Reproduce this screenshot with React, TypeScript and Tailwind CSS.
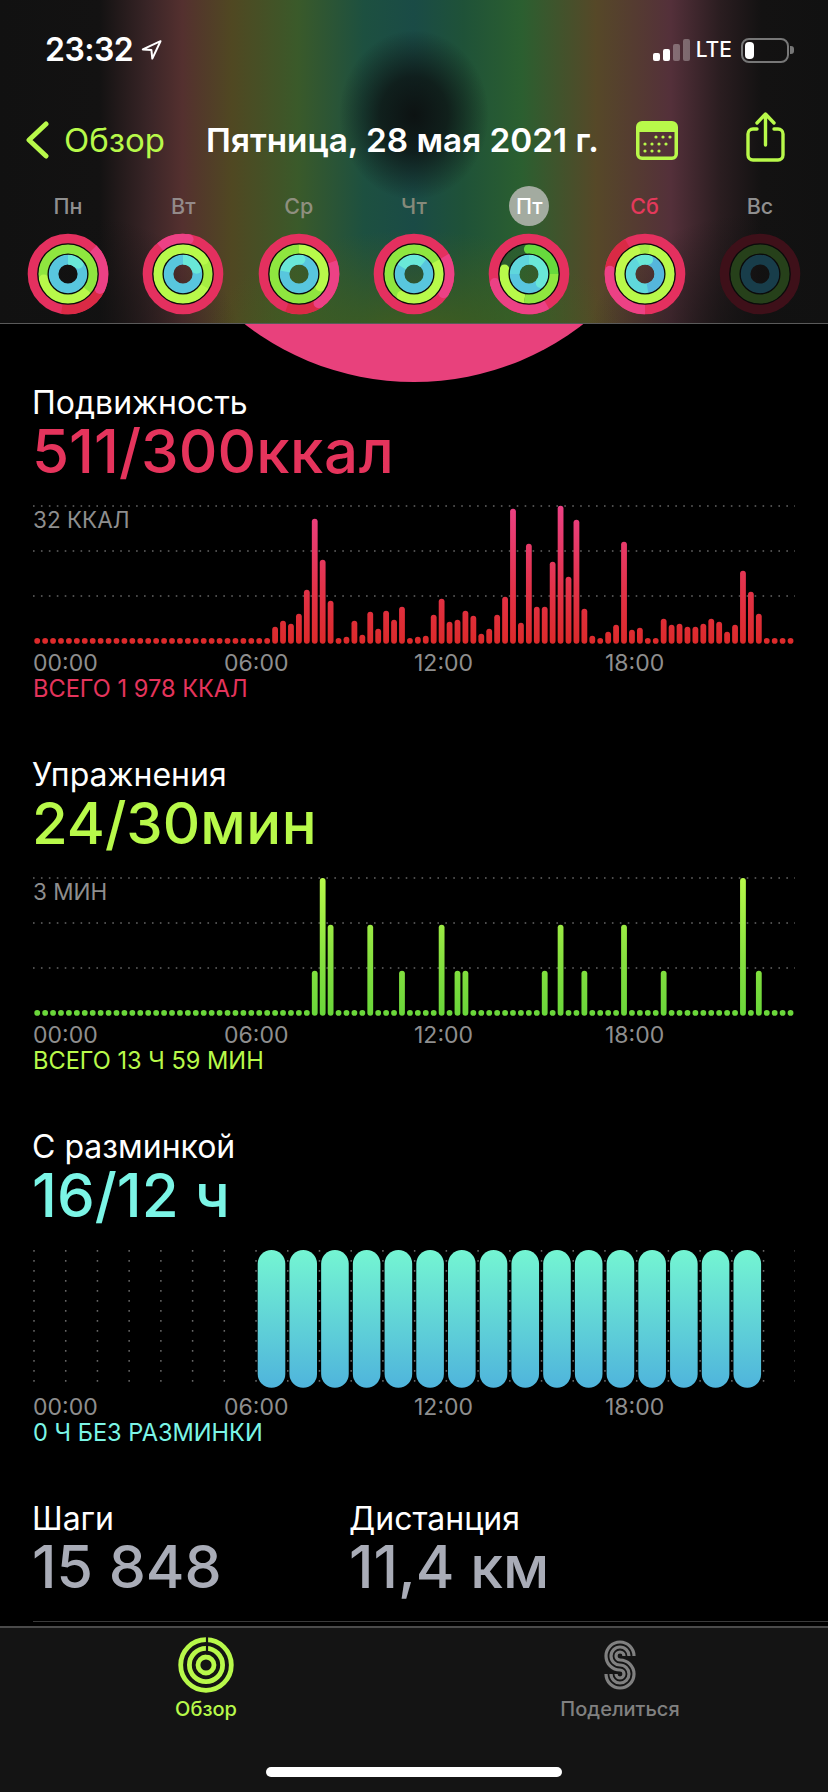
import React from 'react';

const LIME = '#b8f94a';

const redBars: Record<number, number> = {
  30: 17, 31: 23, 32: 20, 33: 30, 34: 54, 35: 125, 36: 84, 37: 43, 39: 7, 40: 23, 41: 9, 42: 32, 43: 15, 44: 33, 45: 24, 46: 37,
  48: 7, 49: 8, 50: 29, 51: 45, 52: 22, 53: 24, 54: 33, 55: 28, 56: 10, 57: 15, 58: 29, 59: 47, 60: 135, 61: 21, 62: 100, 63: 37,
  64: 37, 65: 82, 66: 138, 67: 67, 68: 124, 69: 35, 70: 8, 72: 12, 73: 19, 74: 102, 75: 14, 76: 16, 79: 25, 80: 19, 81: 20, 82: 17,
  83: 17, 84: 20, 85: 25, 86: 22, 87: 12, 88: 19, 89: 73, 90: 52, 91: 30,
};

const greenBars: Record<number, number> = {
  35: 45, 36: 137.7, 37: 91, 42: 91, 46: 45, 51: 91, 53: 45, 54: 45, 64: 45, 66: 91, 69: 45, 74: 91, 79: 45, 89: 137.7, 91: 45,
};

const indexes = Array.from({ length: 96 }, (_, i) => i);

function BarChart({ id, bars, top, mid, bottom }: { id: string; bars: Record<number, number>; top: string; mid: string; bottom: string }) {
  return (
    <svg width="762" height="140" className="block">
      <defs>
        <linearGradient id={id} gradientUnits="userSpaceOnUse" x1="0" y1="1" x2="0" y2="139">
          <stop offset="0" stopColor={top} />
          <stop offset="0.6" stopColor={mid} />
          <stop offset="1" stopColor={bottom} />
        </linearGradient>
      </defs>
      {[1, 46, 91].map((y) => (
        <line key={y} x1="0" x2="762" y1={y} y2={y} stroke="#666666" strokeWidth="1.5" strokeDasharray="1.6 6.33" />
      ))}
      {indexes.map((i) => {
        const h = Math.max(bars[i] ?? 5.6, 5.6);
        return <rect key={i} x={1.3 + i * 7.93} y={138.7 - h} width="5.8" height={h} rx="2.9" fill={`url(#${id})`} />;
      })}
    </svg>
  );
}

function StandChart() {
  return (
    <svg width="762" height="140" className="block">
      <defs>
        <linearGradient id="stand" x1="0" y1="0" x2="0" y2="1">
          <stop offset="0" stopColor="#74f5d2" />
          <stop offset="1" stopColor="#4fb4dc" />
        </linearGradient>
      </defs>
      {Array.from({ length: 25 }, (_, i) => (
        <line key={i} x1={1 + i * 31.72} x2={1 + i * 31.72} y1="1" y2="134" stroke="#666666" strokeWidth="1.5" strokeDasharray="1.8 8.2" />
      ))}
      {Array.from({ length: 16 }, (_, i) => (
        <rect key={i} x={224.7 + i * 31.72} y="1" width="27.6" height="137.7" rx="13.8" fill="url(#stand)" />
      ))}
    </svg>
  );
}

function Section({ title, value, unit, color, size, scale, total, chart }: {
  title: string; value: string; unit: string; color: string; size: string; scale?: string; total: string; chart: React.ReactNode;
}) {
  return (
    <section className="h-[372px] px-[33px]">
      <h2 className="-ml-[1px] text-[32px] leading-[36px] text-white">{title}</h2>
      <div className={`-ml-[1px] leading-[60px] font-medium whitespace-nowrap ${size}`} style={{ color }}>
        {value}
        <span className="tracking-[0.6px]">{unit}</span>
      </div>
      <div className="relative mt-[24px]">
        {chart}
        {scale && <span className="absolute left-0 top-[2px] text-[22.5px] leading-[26px] text-[#8e8e8e]">{scale}</span>}
      </div>
      <div className="relative h-[26px] mt-[5px] text-[23px] leading-[26px] text-[#8e8e8e]">
        <span className="absolute left-0">00:00</span>
        <span className="absolute left-[191px]">06:00</span>
        <span className="absolute left-[381px]">12:00</span>
        <span className="absolute left-[572px]">18:00</span>
      </div>
      <div className="text-[23.6px] leading-[26px]" style={{ color }}>{total}</div>
    </section>
  );
}

const point = (r: number, deg: number) => {
  const a = ((deg - 90) * Math.PI) / 180;
  return [r * Math.cos(a), r * Math.sin(a)];
};

type Arc = { from: number; to: number; color: string; cap?: boolean; startCap?: boolean };

function RingArc({ r, arc, w }: { r: number; arc: Arc; w: number }) {
  const [x0, y0] = point(r, arc.from);
  const [x1, y1] = point(r, arc.to);
  const large = arc.to - arc.from > 180 ? 1 : 0;
  return (
    <g>
      <path d={`M${x0} ${y0}A${r} ${r} 0 ${large} 1 ${x1} ${y1}`} fill="none" stroke={arc.color} strokeWidth={w} />
      {arc.cap && <circle cx={x1} cy={y1} r={w / 2} fill={arc.color} />}
      {arc.startCap && <circle cx={x0} cy={y0} r={w / 2} fill={arc.color} />}
    </g>
  );
}

type RingData = {
  base: [string | null, string | null, string];
  red: Arc[];
  green: Arc[];
  blue: Arc[];
};

const RED = '#e4305f';
const PINK = '#ec4185';
const DEEP = '#da2a45';
const MID = '#8fe63f';
const BLUE = '#58c6de';
const TEAL = '#69e8d8';

const days: { label: string; ring: RingData; tone: string }[] = [
  {
    label: 'Пн',
    tone: 'text-[#8f8f8f]',
    ring: {
      base: [RED, MID, BLUE],
      red: [{ from: 115, to: 190, color: DEEP }, { from: 45, to: 115, color: PINK, cap: true }],
      green: [{ from: 130, to: 257, color: LIME, cap: true }],
      blue: [{ from: 0, to: 45, color: TEAL, cap: true }],
    },
  },
  {
    label: 'Вт',
    tone: 'text-[#938a8a]',
    ring: {
      base: [RED, LIME, BLUE],
      red: [{ from: 320, to: 369, color: PINK, cap: true }],
      green: [{ from: 55, to: 120, color: '#a6ee42' }, { from: 0, to: 55, color: LIME, cap: true }],
      blue: [{ from: 0, to: 69, color: TEAL, cap: true }],
    },
  },
  {
    label: 'Ср',
    tone: 'text-[#8f8f7f]',
    ring: {
      base: [RED, MID, BLUE],
      red: [{ from: 146, to: 200, color: DEEP }, { from: 70, to: 146, color: PINK, cap: true }],
      green: [{ from: 0, to: 120, color: LIME, cap: true }],
      blue: [{ from: 280, to: 365, color: TEAL, cap: true }],
    },
  },
  {
    label: 'Чт',
    tone: 'text-[#858a7a]',
    ring: {
      base: [RED, MID, BLUE],
      red: [{ from: 60, to: 123, color: PINK, cap: true }],
      green: [{ from: 60, to: 209, color: LIME, cap: true }],
      blue: [{ from: 300, to: 400, color: TEAL }],
    },
  },
  {
    label: 'Пт',
    tone: 'text-white',
    ring: {
      base: [RED, null, BLUE],
      red: [{ from: 150, to: 255, color: PINK, cap: true }],
      green: [
        { from: 0, to: 90, color: '#67d93d', startCap: true },
        { from: 90, to: 190, color: '#8fe63f' },
        { from: 190, to: 280, color: LIME, cap: true },
      ],
      blue: [{ from: 0, to: 127, color: TEAL, cap: true }, { from: 270, to: 360, color: '#5fd6dc' }],
    },
  },
  {
    label: 'Сб',
    tone: 'text-[#e3395b]',
    ring: {
      base: [RED, LIME, '#5fd8dc'],
      red: [{ from: 275, to: 330, color: DEEP }, { from: 180, to: 275, color: PINK, cap: true }],
      green: [{ from: 337, to: 370, color: '#a4ea47' }, { from: 280, to: 337, color: '#c0f94c', cap: true }],
      blue: [{ from: 12, to: 170, color: '#55b6dc' }, { from: 330, to: 372, color: TEAL, cap: true }],
    },
  },
  {
    label: 'Вс',
    tone: 'text-[#8f8f8f]',
    ring: { base: ['#3e1019', '#26401a', '#183d4a'], red: [], green: [], blue: [] },
  },
];

function Rings({ ring }: { ring: RingData }) {
  const radii = [35.2, 24.9, 14.7];
  const groups = [ring.red, ring.green, ring.blue];
  return (
    <svg width="82" height="82" viewBox="-41 -41 82 82" className="block">
      {radii.map((r, i) =>
        ring.base[i] ? <circle key={r} r={r} fill="none" stroke={ring.base[i] as string} strokeWidth="10.2" /> : null,
      )}
      {groups.map((arcs, i) => arcs.map((arc, k) => <RingArc key={`${i}-${k}`} r={radii[i]} arc={arc} w={10.2} />))}
      <circle r="30.2" fill="none" stroke="#0b0b0b" strokeWidth="1.3" />
      <circle r="19.9" fill="none" stroke="#0b0b0b" strokeWidth="1.3" />
    </svg>
  );
}

function StatusBar() {
  return (
    <div className="h-[110px] pl-[45px] pr-[34px] pt-[33px] flex items-start justify-between">
      <div className="flex items-center gap-[8px] h-[34px]">
        <span className="text-[32px] leading-[34px] font-semibold text-white tracking-[-0.5px]">23:32</span>
        <svg width="21" height="20" viewBox="0 0 21 20" fill="none">
          <path d="M19.5 1.2 1.8 9.4l8.6.6.9 8.6L19.5 1.2Z" stroke="white" strokeWidth="2" strokeLinejoin="round" />
        </svg>
      </div>
      <div className="flex items-center h-[34px]">
        <div className="flex items-end gap-[3px] h-[22px]">
          <div className="w-[7px] h-[8px] rounded-[2px] bg-white" />
          <div className="w-[7px] h-[12px] rounded-[2px] bg-white" />
          <div className="w-[7px] h-[17px] rounded-[2px] bg-white/30" />
          <div className="w-[7px] h-[22px] rounded-[2px] bg-white/30" />
        </div>
        <span className="ml-[6px] text-[21px] leading-[34px] font-medium text-white">LTE</span>
        <div className="ml-[9px] w-[48px] h-[25px] rounded-[8px] border-[2.5px] border-[#777777] p-[2px]">
          <div className="w-[9px] h-full rounded-[4px] bg-white" />
        </div>
        <div className="ml-[1px] w-[4px] h-[8px] rounded-r-[3px] bg-[#777777]" />
      </div>
    </div>
  );
}

function NavBar() {
  return (
    <div className="relative h-[60px] flex items-center">
      <svg className="ml-[25px]" width="24" height="38" viewBox="0 0 24 38" fill="none">
        <path d="M21 3 4 19l17 16" stroke={LIME} strokeWidth="5" strokeLinecap="round" strokeLinejoin="round" />
      </svg>
      <span className="ml-[15px] text-[33px] leading-[40px] text-[#b8f94a]">Обзор</span>
      <span className="ml-[41px] text-[33.3px] leading-[40px] font-semibold text-white whitespace-nowrap">Пятница, 28 мая 2021 г.</span>
      <svg className="absolute left-[636px] top-[11px]" width="42" height="39" viewBox="0 0 42 39">
        <path d="M6 0h30a6 6 0 0 1 6 6v27a6 6 0 0 1-6 6H6a6 6 0 0 1-6-6V6a6 6 0 0 1 6-6Zm-2.5 11v22A2.5 2.5 0 0 0 6 35.5h30a2.5 2.5 0 0 0 2.5-2.5V11Z" fill={LIME} fillRule="evenodd" />
        {[[20, 16], [27, 16], [34, 16], [9, 23], [16, 23], [23, 23], [30, 23], [9, 30], [16, 30], [23, 30]].map(([x, y]) => (
          <circle key={`${x}-${y}`} cx={x} cy={y} r="1.6" fill={LIME} />
        ))}
      </svg>
      <svg className="absolute left-[745px] top-[2px]" width="42" height="50" viewBox="0 0 42 50" fill="none" stroke={LIME} strokeWidth="3.4" strokeLinecap="round" strokeLinejoin="round">
        <path d="M12 17H8a5 5 0 0 0-5 5v21a5 5 0 0 0 5 5h25a5 5 0 0 0 5-5V22a5 5 0 0 0-5-5h-4" />
        <path d="M20.5 33V3M12 11l8.5-9L29 11" />
      </svg>
    </div>
  );
}

function ActivityIcon() {
  return (
    <svg width="58" height="58" viewBox="-29 -29 58 58" fill="none" stroke={LIME} strokeWidth="4.8">
      <circle r="25.3" />
      <circle r="16.6" />
      <circle r="8" />
      <path d="M1 -29V-10.5" stroke="#141414" strokeWidth="2.2" />
    </svg>
  );
}

function ShareIcon() {
  const strand = (d: number) => {
    const rt = 9 + d;
    const rb = 9 - d;
    return `M${rt} -9A${rt} ${rt} 0 1 0 0 ${d}A${rb} ${rb} 0 1 1 ${-rb} 9`;
  };
  return (
    <svg width="34" height="52" viewBox="-17 -26 34 52" fill="none" stroke="#808080" strokeWidth="3.2">
      {[-5, 0, 5].map((d) => (
        <path key={d} d={strand(d)} />
      ))}
    </svg>
  );
}

export default function App() {
  return (
    <div className="relative w-[828px] h-[1792px] overflow-hidden bg-black flex flex-col font-['Inter',sans-serif]">
      <div className="absolute left-[137px] top-[-172px] w-[554px] h-[554px] rounded-full bg-[#e8417c]" />

      <header className="relative z-10 h-[324px] shrink-0 border-b border-[#5a5a5a] bg-[radial-gradient(ellipse_75px_85px_at_414px_115px,rgba(12,16,16,0.96)_0%,rgba(12,16,16,0.75)_45%,rgba(12,16,16,0)_100%),radial-gradient(ellipse_210px_110px_at_414px_340px,rgba(70,95,25,0.95)_0%,rgba(70,95,25,0)_100%),radial-gradient(ellipse_190px_130px_at_50px_340px,rgba(17,17,17,0.9)_0%,rgba(17,17,17,0)_100%),radial-gradient(ellipse_190px_130px_at_778px_340px,rgba(17,17,17,0.9)_0%,rgba(17,17,17,0)_100%),linear-gradient(90deg,#111111_0%,#131212_12%,#3a2527_18%,#54302f_22%,#504822_28%,#3a5a2a_36%,#1d5040_44%,#1a4b46_50%,#1f5238_56%,#2b5f30_63%,#564828_72%,#54303a_81%,#2a1d20_87%,#131212_92%,#111111_100%)]">
        <StatusBar />
        <NavBar />
        <div className="flex justify-between px-[27px] mt-[16px]">
          {days.map((d) => (
            <div key={d.label} className="w-[82px] flex flex-col items-center">
              <div className={`w-[40px] h-[40px] rounded-full flex items-center justify-center text-[21.5px] font-medium ${d.tone} ${d.label === 'Пт' ? 'bg-[#a3aba0]' : ''}`}>
                {d.label}
              </div>
              <div className="mt-[7px]">
                <Rings ring={d.ring} />
              </div>
            </div>
          ))}
        </div>
      </header>

      <main className="relative flex-1 pt-[61px] min-h-0">
        <Section
          title="Подвижность"
          value="511/300"
          unit="ккал"
          color="#e5345c"
          size="text-[60px]"
          scale="32 ККАЛ"
          total="ВСЕГО 1 978 ККАЛ"
          chart={<BarChart id="move" bars={redBars} top="#ec4185" mid="#e23248" bottom="#dc2a2a" />}
        />
        <Section
          title="Упражнения"
          value="24/30"
          unit="мин"
          color="#b8f94a"
          size="text-[58px]"
          scale="3 МИН"
          total="ВСЕГО 13 Ч 59 МИН"
          chart={<BarChart id="exercise" bars={greenBars} top="#b8f94a" mid="#86e03f" bottom="#69d63a" />}
        />
        <Section
          title="С разминкой"
          value="16/12 ч"
          unit=""
          color="#7bf5e6"
          size="text-[60px]"
          total="0 Ч БЕЗ РАЗМИНКИ"
          chart={<StandChart />}
        />
        <div className="flex px-[33px]">
          <div className="w-[316px]">
            <div className="-ml-[1px] text-[32px] leading-[36px] text-white">Шаги</div>
            <div className="-ml-[1px] text-[59px] leading-[60px] font-medium text-[#a9acb7]">15 848</div>
          </div>
          <div>
            <div className="text-[32px] leading-[36px] text-white">Дистанция</div>
            <div className="text-[59px] leading-[60px] font-medium text-[#a9acb7]">11,4 км</div>
          </div>
        </div>
        <div className="ml-[33px] mt-[24px] h-px bg-[#3a3a3a]" />
      </main>

      <nav className="relative z-10 h-[166px] shrink-0 border-t-2 border-[#4a4a4a] bg-[#141414]">
        <div className="flex pt-[8px]">
          <div className="w-[412px] flex flex-col items-center">
            <ActivityIcon />
            <span className="mt-[2px] text-[20px] leading-[26px] font-medium text-[#b8f94a]">Обзор</span>
          </div>
          <div className="flex-1 flex flex-col items-center">
            <div className="h-[58px] flex items-center"><ShareIcon /></div>
            <span className="mt-[2px] text-[20px] leading-[26px] font-medium text-[#808080]">Поделиться</span>
          </div>
        </div>
        <div className="mx-auto mt-[45px] w-[296px] h-[10px] rounded-full bg-white" />
      </nav>
    </div>
  );
}
